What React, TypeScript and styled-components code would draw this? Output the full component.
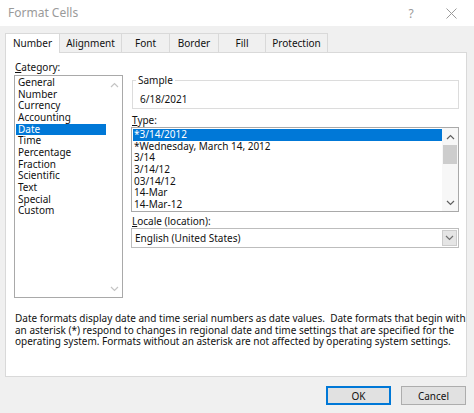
import React from "react";
import styled, { createGlobalStyle } from "styled-components";

const FONT = `"Noto Sans", "Open Sans", "DejaVu Sans", sans-serif`;

const GlobalStyle = createGlobalStyle`
  html, body { margin: 0; padding: 0; background: #f0f0f0; }
  body { width: 474px; height: 413px; overflow: hidden; }
  * { box-sizing: border-box; }
`;

const Dialog = styled.div`
  width: 474px;
  height: 413px;
  display: flex;
  flex-direction: column;
  background: #f0f0f0;
  font-family: ${FONT};
  font-size: 10px;
  color: #111;
`;

const TitleBar = styled.div`
  height: 26px;
  flex: none;
  background: #fff;
  display: flex;
  align-items: center;
  padding: 0 3px 0 8px;
`;

const Title = styled.div`
  flex: 1;
  font-size: 12px;
  color: #9a9a9a;
  line-height: 26px;
`;

const TitleButton = styled.div`
  width: 40px;
  height: 26px;
  display: flex;
  align-items: center;
  justify-content: center;
  color: #9a9a9a;
  font-size: 12px;
`;

const Body = styled.div`
  padding: 7px 7px 0 5px;
  flex: none;
`;

const TabRow = styled.div`
  display: flex;
  height: 19px;
`;

const Tab = styled.div<{ $w: number; $active?: boolean }>`
  width: ${(p) => p.$w}px;
  height: ${(p) => (p.$active ? 20 : 19)}px;
  margin-left: -1px;
  &:first-child { margin-left: 0; }
  border: 1px solid #d9d9d9;
  border-bottom: none;
  background: ${(p) => (p.$active ? "#fff" : "#f0f0f0")};
  position: relative;
  z-index: ${(p) => (p.$active ? 2 : 1)};
  display: flex;
  justify-content: center;
  padding-top: 3px;
  line-height: 12px;
  color: #111;
`;

const Panel = styled.div`
  height: 325px;
  border: 1px solid #d9d9d9;
  background: #fff;
  display: flex;
  flex-direction: column;
  padding: 8px 6px 0 8px;
`;

const Columns = styled.div`
  display: flex;
  gap: 8px;
`;

const LeftCol = styled.div`
  width: 109px;
  display: flex;
  flex-direction: column;
`;

const RightCol = styled.div`
  width: 328px;
  display: flex;
  flex-direction: column;
`;

const Label = styled.div<{ $mt?: number }>`
  height: 12px;
  line-height: 12px;
  padding-left: 1px;
  margin-top: ${(p) => p.$mt ?? 0}px;
  u { text-decoration-thickness: 1px; text-underline-offset: 1px; }
`;

const ListBox = styled.div<{ $h: number; $mt: number }>`
  height: ${(p) => p.$h}px;
  margin-top: ${(p) => p.$mt}px;
  border: 1px solid #a9a9a9;
  display: flex;
  background: #fff;
`;

const Items = styled.div`
  flex: 1;
  padding: 1px 0 1px 1px;
  overflow: hidden;
`;

const Item = styled.div<{ $selected?: boolean; $pl: number }>`
  height: 11.67px;
  line-height: 11.67px;
  padding-left: ${(p) => p.$pl}px;
  white-space: nowrap;
  background: ${(p) => (p.$selected ? "#0078d7" : "transparent")};
  color: ${(p) => (p.$selected ? "#fff" : "#111")};
`;

const ScrollBar = styled.div<{ $track?: boolean }>`
  width: 16px;
  display: flex;
  flex-direction: column;
  background: ${(p) => (p.$track ? "#f7f7f7" : "#fff")};
`;

const ScrollArrow = styled.div`
  height: 17px;
  display: flex;
  align-items: center;
  justify-content: center;
`;

const Track = styled.div`
  flex: 1;
  display: flex;
  justify-content: center;
`;

const Thumb = styled.div`
  width: 14px;
  height: 19px;
  background: #cdcdcd;
`;

const GroupBox = styled.fieldset`
  margin: 13px 0 0 1px;
  padding: 0 0 3px 3px;
  border: 1px solid #dcdcdc;
  min-width: 0;
`;

const Legend = styled.legend`
  padding: 0 2px;
  line-height: 12px;
  font-size: 10px;
`;

const SampleValue = styled.div`
  margin: 7px 0 0 4px;
  line-height: 12px;
  height: 12px;
`;

const Combo = styled.div`
  margin-top: 1px;
  height: 20px;
  border: 1px solid #bdbdbd;
  display: flex;
  align-items: center;
  background: #fff;
`;

const ComboText = styled.div`
  flex: 1;
  padding-left: 3px;
  line-height: 12px;
`;

const ComboButton = styled.div`
  width: 15px;
  height: 16px;
  margin-right: 1px;
  background: #e5e5e5;
  border: 1px solid #cccccc;
  display: flex;
  align-items: center;
  justify-content: center;
`;

const Description = styled.div`
  margin-top: 15px;
  padding-left: 1px;
  line-height: 11.6px;
  white-space: pre;
`;

const Footer = styled.div`
  flex: 1;
  display: flex;
  justify-content: flex-end;
  align-items: flex-start;
  gap: 10px;
  padding: 9px 8px 0 0;
`;

const Button = styled.div<{ $default?: boolean }>`
  width: 65px;
  height: 19px;
  background: #e1e1e1;
  border: 1px solid ${(p) => (p.$default ? "#0078d7" : "#adadad")};
  box-shadow: ${(p) => (p.$default ? "inset 0 0 0 1px #0078d7" : "none")};
  display: flex;
  align-items: center;
  justify-content: center;
  line-height: 12px;
`;

const Chevron = ({ up, color }: { up?: boolean; color: string }) => (
  <svg width="9" height="6" viewBox="0 0 9 6">
    <polyline
      points={up ? "1,5 4.5,1.5 8,5" : "1,1 4.5,4.5 8,1"}
      fill="none"
      stroke={color}
      strokeWidth="1.2"
    />
  </svg>
);

const CloseIcon = () => (
  <svg width="11" height="11" viewBox="0 0 11 11">
    <path d="M0.5 0.5 L10.5 10.5 M10.5 0.5 L0.5 10.5" stroke="#9a9a9a" strokeWidth="1" />
  </svg>
);

const tabs: [string, number][] = [
  ["Number", 55],
  ["Alignment", 63],
  ["Font", 49],
  ["Border", 50],
  ["Fill", 48],
  ["Protection", 63],
];

const categories = [
  "General",
  "Number",
  "Currency",
  "Accounting",
  "Date",
  "Time",
  "Percentage",
  "Fraction",
  "Scientific",
  "Text",
  "Special",
  "Custom",
];

const types = [
  "*3/14/2012",
  "*Wednesday, March 14, 2012",
  "3/14",
  "3/14/12",
  "03/14/12",
  "14-Mar",
  "14-Mar-12",
];

export default function App() {
  return (
    <>
      <GlobalStyle />
      <Dialog>
        <TitleBar>
          <Title>Format Cells</Title>
          <TitleButton>?</TitleButton>
          <TitleButton>
            <CloseIcon />
          </TitleButton>
        </TitleBar>
        <Body>
          <TabRow>
            {tabs.map(([t, w], i) => (
              <Tab key={t} $w={w} $active={i === 0}>
                {t}
              </Tab>
            ))}
          </TabRow>
          <Panel>
            <Columns>
              <LeftCol>
                <Label>
                  <u>C</u>ategory:
                </Label>
                <ListBox $h={223} $mt={2}>
                  <Items>
                    {categories.map((c) => (
                      <Item key={c} $pl={2} $selected={c === "Date"}>
                        {c}
                      </Item>
                    ))}
                  </Items>
                  <ScrollBar>
                    <ScrollArrow>
                      <Chevron up color="#c4c4c4" />
                    </ScrollArrow>
                    <Track />
                    <ScrollArrow>
                      <Chevron color="#c4c4c4" />
                    </ScrollArrow>
                  </ScrollBar>
                </ListBox>
              </LeftCol>
              <RightCol>
                <GroupBox>
                  <Legend>Sample</Legend>
                  <SampleValue>6/18/2021</SampleValue>
                </GroupBox>
                <Label $mt={5}>
                  <u>T</u>ype:
                </Label>
                <ListBox $h={85} $mt={1}>
                  <Items>
                    {types.map((t, i) => (
                      <Item key={t} $pl={1} $selected={i === 0}>
                        {t}
                      </Item>
                    ))}
                  </Items>
                  <ScrollBar $track>
                    <ScrollArrow>
                      <Chevron up color="#606060" />
                    </ScrollArrow>
                    <Track>
                      <Thumb />
                    </Track>
                    <ScrollArrow>
                      <Chevron color="#606060" />
                    </ScrollArrow>
                  </ScrollBar>
                </ListBox>
                <Label $mt={3}>
                  <u>L</u>ocale (location):
                </Label>
                <Combo>
                  <ComboText>English (United States)</ComboText>
                  <ComboButton>
                    <Chevron color="#707070" />
                  </ComboButton>
                </Combo>
              </RightCol>
            </Columns>
            <Description>
              {"Date formats display date and time serial numbers as date values.  Date formats that begin with\n" +
                "an asterisk (*) respond to changes in regional date and time settings that are specified for the\n" +
                "operating system. Formats without an asterisk are not affected by operating system settings."}
            </Description>
          </Panel>
        </Body>
        <Footer>
          <Button $default>OK</Button>
          <Button>Cancel</Button>
        </Footer>
      </Dialog>
    </>
  );
}
